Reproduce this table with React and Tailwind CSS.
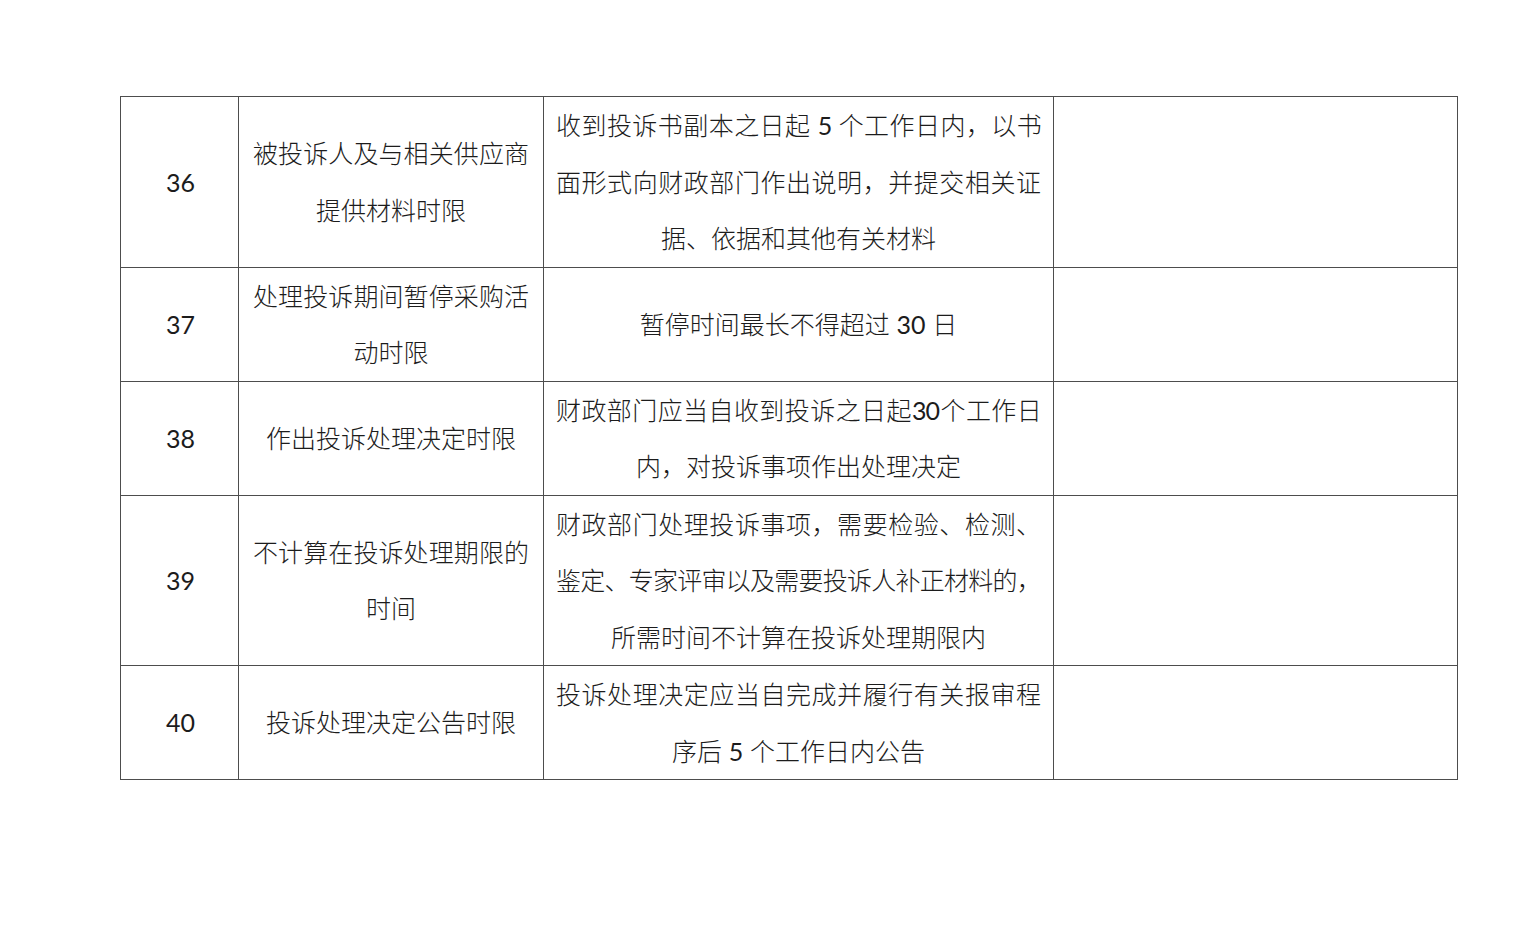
const rows = [
  {
    no: "36",
    item: ["被投诉人及与相关供应商", "提供材料时限"],
    rule: [
      "收到投诉书副本之日起 5 个工作日内，以书",
      "面形式向财政部门作出说明，并提交相关证",
      "据、依据和其他有关材料",
    ],
  },
  {
    no: "37",
    item: ["处理投诉期间暂停采购活", "动时限"],
    rule: ["暂停时间最长不得超过 30 日"],
  },
  {
    no: "38",
    item: ["作出投诉处理决定时限"],
    rule: ["财政部门应当自收到投诉之日起30个工作日", "内，对投诉事项作出处理决定"],
  },
  {
    no: "39",
    item: ["不计算在投诉处理期限的", "时间"],
    rule: [
      "财政部门处理投诉事项，需要检验、检测、",
      "鉴定、专家评审以及需要投诉人补正材料的，",
      "所需时间不计算在投诉处理期限内",
    ],
  },
  {
    no: "40",
    item: ["投诉处理决定公告时限"],
    rule: ["投诉处理决定应当自完成并履行有关报审程", "序后 5 个工作日内公告"],
  },
];

// digits in the regular weight, as in the document
function Text({ line }) {
  return line.split(/(\d+)/).map((part, i) =>
    /^\d+$/.test(part) ? (
      <span key={i} className="font-normal">
        {part}
      </span>
    ) : (
      part
    )
  );
}

// Word-style lines: every line but the last is spread to the full width
function Lines({ lines }) {
  return lines.map((line, i) => {
    const last = i === lines.length - 1;
    const tight = line.length > 19 && !last;
    return (
      <div
        key={i}
        className={
          last
            ? "whitespace-nowrap text-center"
            : tight
            ? "whitespace-nowrap text-justify [text-align-last:justify] tracking-[-0.8px]"
            : "whitespace-nowrap text-justify [text-align-last:justify]"
        }
      >
        <Text line={line} />
      </div>
    );
  });
}

export default function App() {
  return (
    <div
      className="min-h-screen bg-white pt-[96px] pl-[120px] text-[#1c1c1c]"
      style={{ fontFamily: 'Lato, "Noto Sans CJK SC", sans-serif' }}
    >
      <table className="border-collapse text-[25px] font-light leading-[56.5px]">
        <colgroup>
          <col className="w-[118px]" />
          <col className="w-[305px]" />
          <col className="w-[510px]" />
          <col className="w-[404px]" />
        </colgroup>
        <tbody>
          {rows.map((r) => (
            <tr key={r.no}>
              <td className="border border-[#4d4d4d] text-center align-middle font-normal">
                <span className="relative left-[1px]">{r.no}</span>
              </td>
              <td className="border border-[#4d4d4d] px-[14px] align-middle">
                <Lines lines={r.item} />
              </td>
              <td className="border border-[#4d4d4d] px-[12px] align-middle">
                <Lines lines={r.rule} />
              </td>
              <td className="border border-[#4d4d4d]" />
            </tr>
          ))}
        </tbody>
      </table>
    </div>
  );
}
